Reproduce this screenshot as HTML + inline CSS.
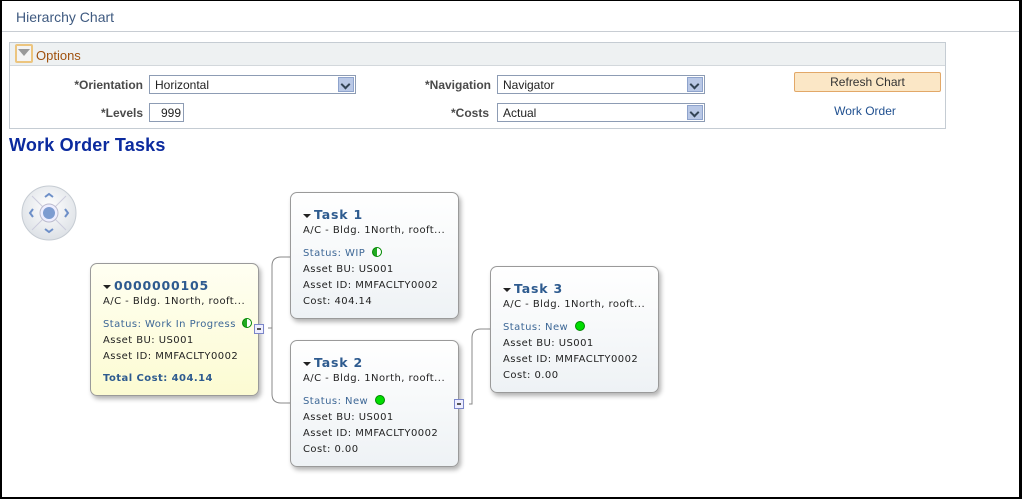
<!DOCTYPE html>
<html><head><meta charset="utf-8"><style>
*{margin:0;padding:0;box-sizing:border-box}
body{width:1022px;height:499px;background:#fff;position:relative;overflow:hidden;font-family:"Liberation Sans",Arial,sans-serif}
.a{position:absolute}
.lbl{font-size:12px;font-weight:bold;color:#4a4a4a;text-align:right;white-space:nowrap}
.sel{border:1px solid #8d9cb4;height:19px;font-size:12px;color:#222;padding:2px 5px;background:#fff}
.sel .dd{position:absolute;right:1px;top:1px;width:16px;height:15px;background:#b9c8e6;border:1px solid #8ea3cc}
.sel .dd:after{content:"";position:absolute;left:3px;top:3px;width:5px;height:5px;border-right:2px solid #345;border-bottom:2px solid #345;transform:rotate(45deg)}
.node{position:absolute;width:169px;border:1px solid #9a9a9a;border-radius:7px;background:linear-gradient(#fff,#eef2f5);box-shadow:2px 3px 5px rgba(0,0,0,.3);font-family:"DejaVu Sans",Verdana,sans-serif;font-size:10px;letter-spacing:0.45px;color:#222;padding:13px 0 0 12px;line-height:16px;white-space:nowrap}
.node .t{font-size:12.5px;font-weight:bold;color:#2e5b8f;line-height:17px;letter-spacing:0.8px}
.node .t:before{content:"";display:inline-block;border-left:4px solid transparent;border-right:4px solid transparent;border-top:4px solid #222;margin-right:3px;vertical-align:middle}
.st{color:#3d6796;margin-top:7px}
.dot{display:inline-block;width:10px;height:10px;border-radius:50%;background:#0d0;border:1px solid #080;vertical-align:-1px;margin-left:3px}
.half{background:linear-gradient(90deg,#2a2 50%,#fff 50%)}
.mn{position:absolute;width:10px;height:10px;border:1px solid #7b86c9;background:#eef;}
.mn:after{content:"";position:absolute;left:2px;top:3px;width:4px;height:2px;background:#555}
</style></head><body>
<div class="a" style="left:0;top:0;width:1022px;height:499px;border:2px solid #000;border-top-width:1px;border-right-width:3px;border-bottom-width:2px"></div>
<div class="a" style="left:16px;top:9px;font-size:14px;color:#3f5a80">Hierarchy Chart</div>
<div class="a" style="left:2px;top:31px;width:1017px;height:1px;background:#c8cdd3"></div>
<div class="a" style="left:9px;top:42px;width:937px;height:87px;border:1px solid #c5ccd3"></div>
<div class="a" style="left:10px;top:43px;width:935px;height:23px;background:#eef1f2;border-bottom:1px solid #d3d8dc"></div>
<div class="a" style="left:15px;top:44px;width:18px;height:19px;border:2px solid #ecc57f;border-radius:2px;background:#f4f4f4"></div>
<div class="a" style="left:18px;top:49px;border-left:6px solid transparent;border-right:6px solid transparent;border-top:7px solid #999"></div>
<div class="a" style="left:36px;top:48px;font-size:13px;color:#a0520f">Options</div>
<div class="a lbl" style="left:40px;width:103px;top:78px">*Orientation</div>
<div class="a sel" style="left:149px;top:75px;width:207px">Horizontal<span class="dd"></span></div>
<div class="a lbl" style="left:40px;width:103px;top:106px">*Levels</div>
<div class="a sel" style="left:149px;top:103px;width:35px;text-align:right;padding-right:2px">999</div>
<div class="a lbl" style="left:380px;width:111px;top:78px">*Navigation</div>
<div class="a sel" style="left:497px;top:75px;width:208px">Navigator<span class="dd"></span></div>
<div class="a lbl" style="left:380px;width:109px;top:106px">*Costs</div>
<div class="a sel" style="left:497px;top:103px;width:208px">Actual<span class="dd"></span></div>
<div class="a" style="left:794px;top:72px;width:147px;height:20px;border:1px solid #e2a868;border-radius:2px;background:#fbe7c6;font-size:12px;color:#333;text-align:center;line-height:19px">Refresh Chart</div>
<div class="a" style="left:794px;top:104px;width:142px;text-align:center;font-size:12px;color:#1f4f8f">Work Order</div>
<div class="a" style="left:9px;top:135px;font-size:18px;font-weight:bold;color:#0b2a9e;letter-spacing:0.2px">Work Order Tasks</div>
<svg class="a" style="left:20px;top:184px" width="60" height="60" viewBox="0 0 60 60">
<defs><radialGradient id="g" cx="50%" cy="40%" r="60%"><stop offset="0" stop-color="#fff"/><stop offset="1" stop-color="#dde1e6"/></radialGradient></defs>
<circle cx="29" cy="29" r="27" fill="url(#g)" stroke="#c6ccd3"/>
<line x1="12" y1="12" x2="46" y2="46" stroke="#ccd"/><line x1="46" y1="12" x2="12" y2="46" stroke="#ccd"/>
<circle cx="29" cy="29" r="9" fill="#eef" stroke="#bbc"/><circle cx="29" cy="29" r="6" fill="#7d9cd0"/>
<path d="M25 13l4-3 4 3M25 45l4 3 4-3M13 25l-3 4 3 4M45 25l3 4-3 4" fill="none" stroke="#6d8fc8" stroke-width="2"/>
</svg>
<svg class="a" style="left:0;top:0" width="700" height="499">
<path d="M268 328h4M272 328v-62q0-9 9-9h9M272 328v66q0 9 9 9h9M469 404h3v-66q0-9 9-9h9" fill="none" stroke="#888" stroke-width="1"/>
</svg>
<div class="node" style="left:90px;top:263px;height:133px;background:linear-gradient(#fffff2,#fcfbd2)">
<div class="t">0000000105</div><div>A/C - Bldg. 1North, rooft...</div>
<div class="st">Status: Work In Progress <span class="dot half"></span></div>
<div>Asset BU: US001</div><div>Asset ID: MMFACLTY0002</div>
<div style="color:#2e5b8f;font-weight:bold;margin-top:6px">Total Cost: 404.14</div></div>
<div class="mn" style="left:254px;top:324px"></div>
<div class="node" style="left:290px;top:192px;height:127px">
<div class="t">Task 1</div><div>A/C - Bldg. 1North, rooft...</div>
<div class="st">Status: WIP <span class="dot half"></span></div>
<div>Asset BU: US001</div><div>Asset ID: MMFACLTY0002</div><div>Cost: 404.14</div></div>
<div class="node" style="left:290px;top:340px;height:127px">
<div class="t">Task 2</div><div>A/C - Bldg. 1North, rooft...</div>
<div class="st">Status: New <span class="dot"></span></div>
<div>Asset BU: US001</div><div>Asset ID: MMFACLTY0002</div><div>Cost: 0.00</div></div>
<div class="mn" style="left:454px;top:399px"></div>
<div class="node" style="left:490px;top:266px;height:127px">
<div class="t">Task 3</div><div>A/C - Bldg. 1North, rooft...</div>
<div class="st">Status: New <span class="dot"></span></div>
<div>Asset BU: US001</div><div>Asset ID: MMFACLTY0002</div><div>Cost: 0.00</div></div>
</body></html>
